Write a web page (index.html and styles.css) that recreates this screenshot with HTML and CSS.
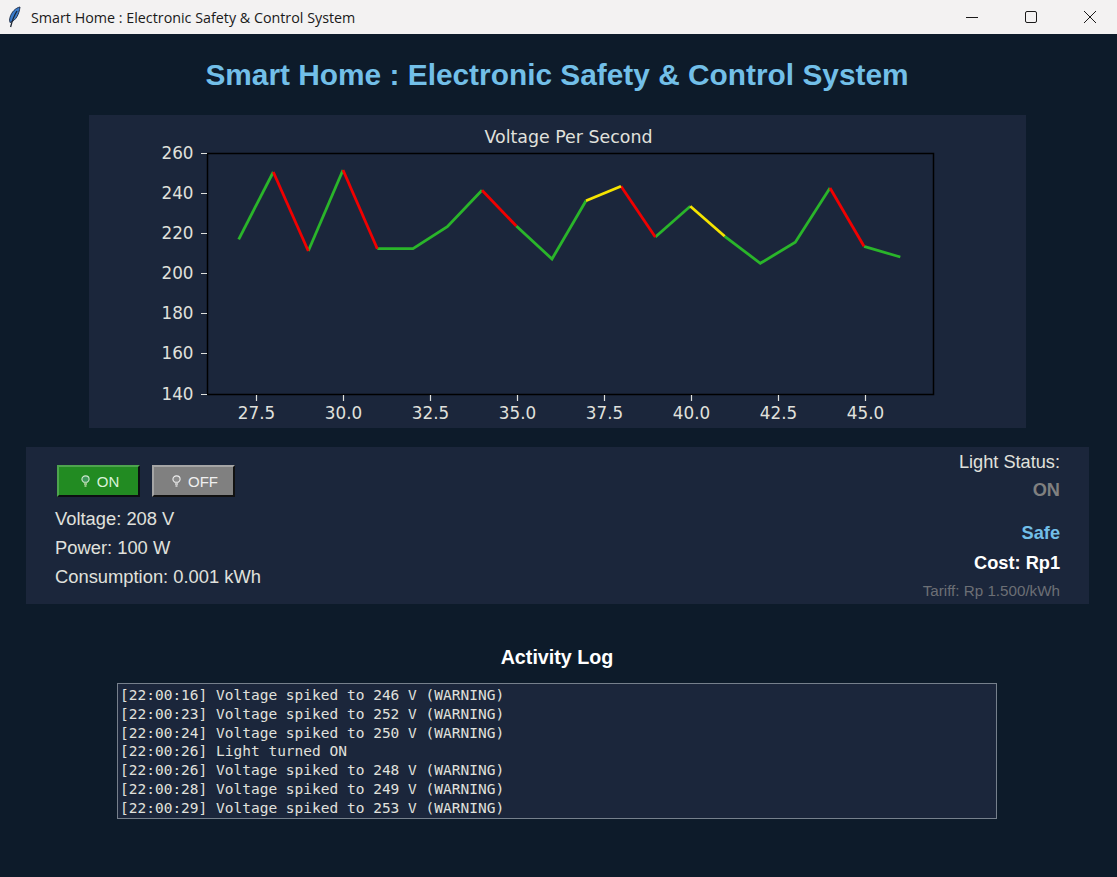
FILE: index.html
```html
<!DOCTYPE html>
<html lang="en">
<head>
    <meta charset="UTF-8">
    <title>Smart Home : Electronic Safety &amp; Control System</title>
    <link rel="stylesheet" href="styles.css">
</head>
<body>
    <div class="titlebar">
        <svg class="app-icon" width="14" height="24" viewBox="0 0 14 24">
            <path d="M13 2C8.500 3 4.500 7 3 12.500c-.5 1.800-.5 3.500 0 5C9 15.500 12 9.500 13 2z" fill="#3a7ccc" stroke="#24344f" stroke-width="1"/>
            <path d="M10 6C8 9 5.800 13 3.600 22" fill="none" stroke="#1b2533" stroke-width="1.300"/>
        </svg>
        <span class="window-title">Smart Home : Electronic Safety &amp; Control System</span>
        <div class="window-controls">
            <svg width="12" height="12" viewBox="0 0 12 12"><path d="M0 6.500H12" stroke="#1a1a1a" fill="none"/></svg>
            <svg width="12" height="12" viewBox="0 0 12 12"><rect x="0.500" y="0.500" width="11" height="11" rx="1.500" stroke="#1a1a1a" fill="none"/></svg>
            <svg width="12" height="12" viewBox="0 0 12 12"><path d="M0 0L12 12M12 0L0 12" stroke="#1a1a1a" fill="none"/></svg>
        </div>
    </div>

    <h1 class="main-title">Smart Home : Electronic Safety &amp; Control System</h1>

    <div class="chart-card">
        <!-- viewBox starts at the card corner: 89,115 in the window -->
        <svg class="chart" width="937" height="313" viewBox="89 115 937 313">
            <text class="chart-title" x="568.500" y="143">Voltage Per Second</text>
            <rect x="207.500" y="153.500" width="726" height="241" fill="none" stroke="#000" stroke-width="1.500"/>

            <g class="ticks">
                <path d="M201 153.500H207M201 193.500H207M201 233.500H207M201 273.500H207M201 313.500H207M201 353.500H207M201 394.500H207"/>
                <path d="M256.500 395V401M343.500 395V401M430.500 395V401M517.500 395V401M604.500 395V401M691.500 395V401M778.500 395V401M865.500 395V401"/>
            </g>

            <g class="y-labels">
                <text x="193.500" y="159">260</text>
                <text x="193.500" y="199">240</text>
                <text x="193.500" y="239">220</text>
                <text x="193.500" y="279">200</text>
                <text x="193.500" y="319">180</text>
                <text x="193.500" y="359">160</text>
                <text x="193.500" y="400">140</text>
            </g>
            <g class="x-labels">
                <text x="256.500" y="419">27.5</text>
                <text x="343.500" y="419">30.0</text>
                <text x="430.500" y="419">32.5</text>
                <text x="517.500" y="419">35.0</text>
                <text x="604.500" y="419">37.5</text>
                <text x="691.500" y="419">40.0</text>
                <text x="778.500" y="419">42.5</text>
                <text x="865.500" y="419">45.0</text>
            </g>

            <!-- green -->
            <g class="line line-green">
                <polyline points="238.700,239.300 273.300,172"/>
                <polyline points="308.300,251 343,170"/>
                <polyline points="377.300,248.700 413,248.700 447.300,226.700 482,190.300"/>
                <polyline points="516.300,226 552,259 586,200.700"/>
                <polyline points="655.300,237 690.300,206.300"/>
                <polyline points="724.700,236.300 760.300,263.300 795.300,242.300 830,188"/>
                <polyline points="864,246.300 900.300,257"/>
            </g>
            <!-- red -->
            <g class="line line-red">
                <polyline points="273.300,172 308.300,251"/>
                <polyline points="343,170 377.300,248.700"/>
                <polyline points="482,190.300 516.300,226"/>
                <polyline points="621,186.300 655.300,237"/>
                <polyline points="830,188 864,246.300"/>
            </g>
            <!-- yellow -->
            <g class="line line-yellow">
                <polyline points="586,200.700 621,186.300"/>
                <polyline points="690.300,206.300 724.700,236.300"/>
            </g>
        </svg>
    </div>

    <div class="control-panel">
        <div class="left-side">
            <div class="button-row">
                <button class="btn btn-on">
                    <svg class="bulb" width="9" height="12" viewBox="0 0 9 12">
                        <path d="M2.800 7.300C1.500 6.500.9 5.400.9 4.200.9 2.300 2.500.9 4.500.9s3.600 1.400 3.600 3.300c0 1.200-.6 2.300-1.900 3.100z" fill="#3f9a5a" stroke="#cfe8cf" stroke-width="1.100"/>
                        <path d="M3 9H6M3.500 11H5.500" stroke="#bcd9a8" stroke-width="1.300"/>
                    </svg>
                    ON
                </button>
                <button class="btn btn-off">
                    <svg class="bulb" width="9" height="12" viewBox="0 0 9 12">
                        <path d="M2.800 7.300C1.500 6.500.9 5.400.9 4.200.9 2.300 2.500.9 4.500.9s3.600 1.400 3.600 3.300c0 1.200-.6 2.300-1.900 3.100z" fill="#8d8d8d" stroke="#eeeeee" stroke-width="1.100"/>
                        <path d="M3 9H6M3.500 11H5.500" stroke="#dddddd" stroke-width="1.300"/>
                    </svg>
                    OFF
                </button>
            </div>
            <div class="reading">Voltage: 208 V</div>
            <div class="reading">Power: 100 W</div>
            <div class="reading">Consumption: 0.001 kWh</div>
        </div>
        <div class="right-side">
            <div class="status-label">Light Status:</div>
            <div class="status-value">ON</div>
            <div class="safe-text">Safe</div>
            <div class="cost-text">Cost: Rp1</div>
            <div class="tariff-text">Tariff: Rp 1.500/kWh</div>
        </div>
    </div>

    <h2 class="log-title">Activity Log</h2>
    <div class="log-box">
        <div>[22:00:16] Voltage spiked to 246 V (WARNING)</div>
        <div>[22:00:23] Voltage spiked to 252 V (WARNING)</div>
        <div>[22:00:24] Voltage spiked to 250 V (WARNING)</div>
        <div>[22:00:26] Light turned ON</div>
        <div>[22:00:26] Voltage spiked to 248 V (WARNING)</div>
        <div>[22:00:28] Voltage spiked to 249 V (WARNING)</div>
        <div>[22:00:29] Voltage spiked to 253 V (WARNING)</div>
    </div>
</body>
</html>
```

FILE: styles.css
```css
body {
    font-family: "Liberation Sans", Arial, sans-serif;
    margin: 0;
    padding: 0;
    height: 877px;
    overflow: hidden;
    background-color: #0d1b2a;
    color: #e0e1dd;
}
.titlebar {
    display: flex;
    align-items: center;
    height: 34px;
    background-color: #f3f2f2;
    color: #1a1a1a;
    font-family: "Open Sans", sans-serif;
    font-size: 14.300px;
}
.app-icon {
    margin-left: 7px;
    margin-right: 10px;
}
.window-title {
    flex: 1;
}
.window-controls {
    display: flex;
    align-items: center;
    gap: 47px;
    padding-right: 21px;
}
.main-title {
    margin: 24px 0 23px;
    padding-right: 3px;
    height: 34px;
    line-height: 34px;
    font-size: 29.850px;
    font-weight: bold;
    text-align: center;
    color: #72bfe8;
}
.chart-card {
    width: 937px;
    height: 313px;
    margin-left: 89px;
    background-color: #1b263b;
}
.chart {
    display: block;
    font-family: "DejaVu Sans", sans-serif;
}
.chart text {
    fill: #e0e1dd;
    font-size: 16.800px;
}
.chart .chart-title {
    font-size: 17.400px;
    text-anchor: middle;
}
.y-labels text {
    text-anchor: end;
}
.x-labels text {
    text-anchor: middle;
}
.ticks path {
    fill: none;
    stroke: #e0e1dd;
    stroke-width: 1.200;
}
.line polyline {
    fill: none;
    stroke-width: 2.800;
    stroke-linejoin: miter;
}
.line-green polyline {
    stroke: #2ab52a;
}
.line-red polyline {
    stroke: #f00000;
}
.line-yellow polyline {
    stroke: #f5e400;
}
.control-panel {
    display: flex;
    justify-content: space-between;
    box-sizing: border-box;
    width: 1063px;
    height: 157px;
    margin: 19px 0 0 26px;
    padding: 0 29px 0 29px;
    background-color: #1b263b;
}
.button-row {
    display: flex;
    gap: 12px;
    margin: 18px 0 7px 2px;
}
.btn {
    display: flex;
    align-items: center;
    justify-content: center;
    gap: 7px;
    box-sizing: border-box;
    width: 83px;
    height: 32px;
    padding: 0 0 0 3px;
    border: 2px solid;
    font-family: "Liberation Sans", Arial, sans-serif;
    font-size: 15px;
    color: white;
}
.btn-on {
    background-color: #228b22;
    border-color: #4ea44e #0c0f12 #0c0f12 #4ea44e;
    color: #d8f3d8;
}
.btn-off {
    background-color: #808080;
    border-color: #a5a5a5 #111 #111 #a5a5a5;
    color: #f0f0f0;
}
.reading {
    height: 29px;
    line-height: 29px;
    font-size: 18.350px;
}
.right-side {
    text-align: right;
    padding-top: 1px;
}
.status-label {
    height: 28px;
    line-height: 28px;
    font-size: 18.200px;
}
.status-value {
    height: 28px;
    line-height: 28px;
    font-size: 18.200px;
    font-weight: bold;
    color: #808080;
}
.safe-text {
    height: 30px;
    line-height: 30px;
    margin-top: 14px;
    font-size: 18.200px;
    font-weight: bold;
    color: #72bfe8;
}
.cost-text {
    height: 30px;
    line-height: 30px;
    font-size: 18.200px;
    font-weight: bold;
    color: white;
}
.tariff-text {
    height: 26px;
    line-height: 26px;
    font-size: 15.200px;
    color: #6c6f75;
}
.log-title {
    margin: 41px 0 14px;
    height: 24px;
    line-height: 24px;
    font-size: 19.700px;
    font-weight: bold;
    text-align: center;
    padding-right: 3px;
    color: white;
}
.log-box {
    box-sizing: border-box;
    width: 880px;
    height: 136px;
    margin-left: 117px;
    padding: 2px 2px;
    border: 1px solid #76808c;
    background-color: #1b263b;
    font-family: "DejaVu Sans Mono", monospace;
    font-size: 14.500px;
    line-height: 18.800px;
    white-space: nowrap;
}
```
